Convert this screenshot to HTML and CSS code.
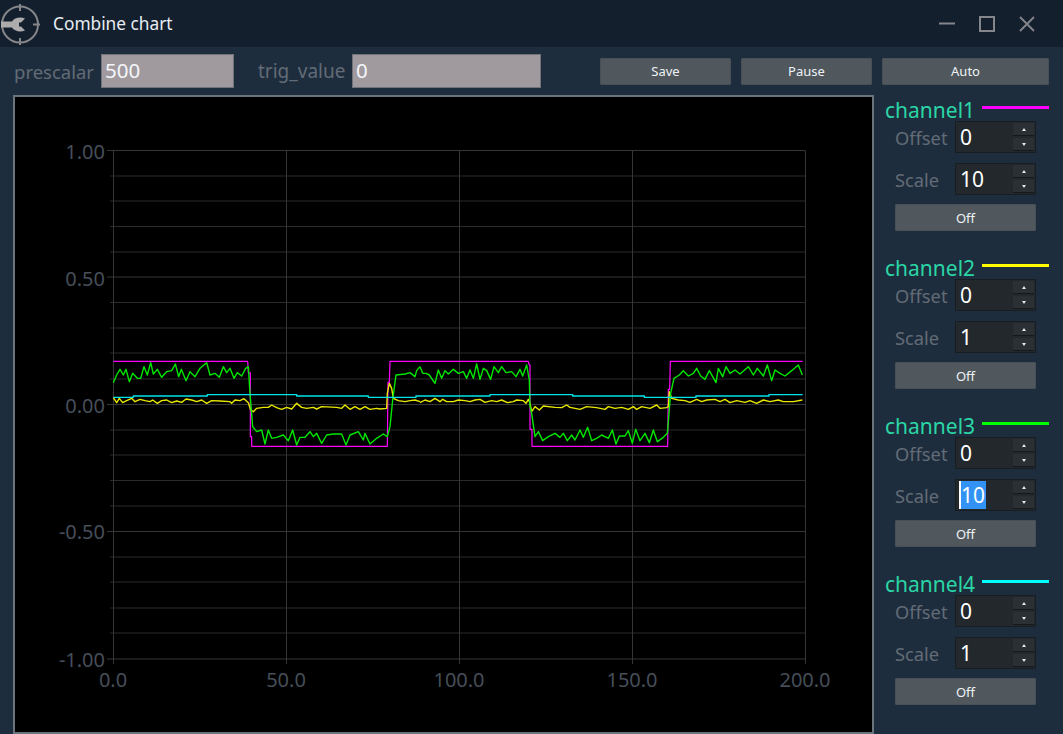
FILE: index.html
```html
<!doctype html>
<html>
<head>
<meta charset="utf-8">
<title>Combine chart</title>
<link rel="stylesheet" href="styles.css">
</head>

<body>
<div class="title_bar">
	<svg class="logo" width="42" height="46" viewBox="0 0 42 46">
		<circle cx="20" cy="23.500" r="18" fill="none" stroke="#85868a" stroke-width="2"/>
		<path d="M20 3V10M20 37V44M33 23.500H40" fill="none" stroke="#85868a" stroke-width="2"/>
		<path d="M1 20.500H12C14 17 20 15.500 25 17.500L21 21.500H19V25.500H21L25 29.500C20 31.500 14 30 12 26.500H1Z" fill="#adabab"/>
	</svg>
	<span class="title_text">Combine chart</span>
	<div class="win_btns">
		<svg width="16" height="16" viewBox="0 0 16 16"><path d="M0 7.500H16" stroke="#85868c" stroke-width="2"/></svg>
		<svg width="16" height="16" viewBox="0 0 16 16"><rect x="1" y="1" width="14" height="14" fill="none" stroke="#85868c" stroke-width="2"/></svg>
		<svg width="16" height="16" viewBox="0 0 16 16"><path d="M1 1L15 15M15 1L1 15" stroke="#85868c" stroke-width="1.800"/></svg>
	</div>
</div>

<div class="tool_bar">
	<label class="tool_label">prescalar</label>
	<div class="line_edit edit_short">500</div>
	<label class="tool_label label_trig">trig_value</label>
	<div class="line_edit edit_long">0</div>
	<div class="tool_btns">
		<div class="btn btn_tool">Save</div>
		<div class="btn btn_tool">Pause</div>
		<div class="btn btn_tool btn_auto">Auto</div>
	</div>
</div>

<div class="main">
	<div class="chart">
		<svg class="plot" width="857" height="635" viewBox="15 97 857 635">
			<!-- 网格 -->
			<path class="grid" d="M110 176H805M110 201H805M110 226.500H805M110 252H805M110 302.500H805M110 328H805M110 353H805M110 379H805M110 430H805M110 455H805M110 480.500H805M110 506H805M110 557H805M110 582H805M110 608H805M110 633H805"/>
			<path class="axis" d="M107 150.500H805M107 277H805M107 404.500H805M107 531.500H805M107 659H805M113.500 150.500V664M286.500 150.500V664M459.500 150.500V664M632.500 150.500V664M805.500 150.500V664"/>

			<text class="y_text" x="105" y="159">1.00</text>
			<text class="y_text" x="105" y="286">0.50</text>
			<text class="y_text" x="105" y="413">0.00</text>
			<text class="y_text" x="105" y="539">-0.50</text>
			<text class="y_text" x="105" y="667">-1.00</text>
			<text class="x_text" x="113" y="687">0.0</text>
			<text class="x_text" x="286" y="687">50.0</text>
			<text class="x_text" x="459" y="687">100.0</text>
			<text class="x_text" x="632" y="687">150.0</text>
			<text class="x_text" x="805" y="687">200.0</text>

			<!-- 曲线 -->
			<g transform="translate(100 350) scale(0.33333)">
				<polyline class="line ch1" points="40,34 443,34 445,68 451,68 451,260 455,260 455,289 862,289 864,97 868,97 870,34 960,34"/>
				<polyline class="line ch2" points="40,143 50,158 58,145 68,158 80,152 95,145 105,155 120,148 135,152 150,155 158,150 172,160 185,152 200,150 215,158 230,153 245,157 258,147 275,150 290,155 305,150 320,160 335,152 360,153 390,155 395,160 405,150 420,152 432,146 445,158 452,180 460,185 470,175 490,172 505,172 515,165 530,173 545,178 560,172 575,177 590,160 605,172 620,175 640,172 650,177 665,170 710,172 725,175 735,165 750,178 765,170 780,178 795,170 810,178 830,175 840,177 860,175 862,130 868,100 875,115 880,145 895,152 915,155 930,152 945,150 960,155"/>
				<polyline class="line ch3" points="40,98 50,75 60,58 70,75 78,58 88,95 98,70 112,85 122,85 132,50 142,75 152,38 160,72 172,58 185,82 200,65 215,62 226,42 236,80 244,58 258,92 270,65 285,80 300,55 320,38 330,75 345,70 358,82 370,50 380,68 390,55 402,85 412,68 425,78 437,55 445,50 450,130 458,230 470,245 485,240 495,282 505,240 515,265 530,262 550,255 565,272 578,240 590,285 600,262 615,262 630,245 640,260 650,250 665,280 680,255 700,252 725,252 738,285 750,255 775,245 790,270 795,250 810,282 830,265 850,252 862,260 870,230 878,150 888,75 915,72 930,68 945,80 950,62 960,50"/>
				<polyline class="line ch4" points="40,142 100,142 100,138 322,138 322,134 590,134 590,138 805,138 805,142 948,142 948,138 960,138"/>
			</g>
			<g transform="translate(420 350) scale(0.33333)">
				<polyline class="line ch1" points="0,34 325,34 328,45 330,45 330,238 336,238 336,289 743,289 745,118 749,118 751,34 1148,34"/>
				<polyline class="line ch2" points="0,158 15,150 30,155 45,145 60,155 68,148 80,155 100,155 115,150 135,152 150,155 165,150 180,148 195,157 215,152 230,155 245,150 262,158 280,155 290,150 310,152 318,160 325,148 330,160 335,185 345,170 358,180 370,168 405,172 425,173 440,165 450,172 480,178 500,170 530,173 555,178 565,170 585,175 605,172 625,178 640,170 650,178 665,170 690,175 710,165 720,175 740,173 745,170 748,125 755,145 775,150 795,152 810,157 830,148 845,155 860,150 885,148 900,155 915,148 930,158 950,152 975,157 990,152 1010,160 1030,150 1050,155 1075,150 1090,155 1120,155 1147,150"/>
				<polyline class="line ch3" points="0,50 8,70 18,70 28,75 45,100 55,60 65,85 75,62 85,72 100,58 115,70 130,65 140,85 150,60 160,85 170,42 180,88 190,55 200,62 212,88 222,50 235,68 245,50 258,68 275,65 288,80 300,58 308,78 320,45 328,90 330,170 335,190 345,260 355,245 368,272 385,260 405,250 420,262 430,250 442,272 455,255 465,270 480,240 490,262 503,232 515,272 530,265 545,255 565,265 577,240 588,282 598,258 615,258 625,242 637,280 647,238 660,272 675,250 688,278 700,240 712,275 730,262 742,250 745,215 752,130 762,85 778,75 790,62 805,78 820,70 830,55 842,78 855,88 868,62 888,98 895,55 908,80 918,50 930,70 945,60 960,72 985,50 1000,75 1012,55 1030,78 1042,45 1055,92 1065,60 1080,70 1095,78 1115,62 1135,45 1147,75"/>
				<polyline class="line ch4" points="0,138 210,138 210,134 458,134 458,138 673,138 673,142 828,142 828,138 1047,138 1047,134 1148,134"/>
			</g>
		</svg>
	</div>

	<div class="side">
		<div class="channel">
			<div class="channel_head"><span class="channel_name">channel1</span><i class="channel_line line_ch1"></i></div>
			<div class="spin_row">
				<label class="spin_label">Offset</label>
				<div class="spin"><span class="spin_val">0</span><div class="spin_btns"><b class="spin_up"></b><b class="spin_down"></b></div></div>
			</div>
			<div class="spin_row">
				<label class="spin_label">Scale</label>
				<div class="spin"><span class="spin_val">10</span><div class="spin_btns"><b class="spin_up"></b><b class="spin_down"></b></div></div>
			</div>
			<div class="btn btn_off">Off</div>
		</div>
		<div class="channel">
			<div class="channel_head"><span class="channel_name">channel2</span><i class="channel_line line_ch2"></i></div>
			<div class="spin_row">
				<label class="spin_label">Offset</label>
				<div class="spin"><span class="spin_val">0</span><div class="spin_btns"><b class="spin_up"></b><b class="spin_down"></b></div></div>
			</div>
			<div class="spin_row">
				<label class="spin_label">Scale</label>
				<div class="spin"><span class="spin_val">1</span><div class="spin_btns"><b class="spin_up"></b><b class="spin_down"></b></div></div>
			</div>
			<div class="btn btn_off">Off</div>
		</div>
		<div class="channel">
			<div class="channel_head"><span class="channel_name">channel3</span><i class="channel_line line_ch3"></i></div>
			<div class="spin_row">
				<label class="spin_label">Offset</label>
				<div class="spin"><span class="spin_val">0</span><div class="spin_btns"><b class="spin_up"></b><b class="spin_down"></b></div></div>
			</div>
			<div class="spin_row">
				<label class="spin_label">Scale</label>
				<div class="spin"><span class="spin_val spin_sel">10</span><div class="spin_btns"><b class="spin_up"></b><b class="spin_down"></b></div></div>
			</div>
			<div class="btn btn_off">Off</div>
		</div>
		<div class="channel">
			<div class="channel_head"><span class="channel_name">channel4</span><i class="channel_line line_ch4"></i></div>
			<div class="spin_row">
				<label class="spin_label">Offset</label>
				<div class="spin"><span class="spin_val">0</span><div class="spin_btns"><b class="spin_up"></b><b class="spin_down"></b></div></div>
			</div>
			<div class="spin_row">
				<label class="spin_label">Scale</label>
				<div class="spin"><span class="spin_val">1</span><div class="spin_btns"><b class="spin_up"></b><b class="spin_down"></b></div></div>
			</div>
			<div class="btn btn_off">Off</div>
		</div>
	</div>
</div>
</body>
</html>
```

FILE: styles.css
```css
* {margin:0; padding:0; box-sizing:border-box;}

html, body {height:100%;}
body {width:1063px; height:734px; overflow:hidden; background:#1e2d3d; font-family:"Noto Sans", "Noto Sans CJK SC", sans-serif; color:#fff;}

.title_bar {display:flex; align-items:center; height:47px; background:#141f2e;}
.logo {flex:none; margin-top:1px;}
.title_text {margin-left:11px; font-size:17.300px; color:#e6edf3;}
.win_btns {display:flex; gap:24px; margin-left:auto; padding-right:28px;}

.tool_bar {display:flex; align-items:center; height:48px; padding:0 14px;}
.tool_label {width:79px; font-size:18.500px; white-space:nowrap; color:#626b76;}
.label_trig {width:86px; margin-left:24px; font-size:19px;}
.line_edit {height:34px; margin-left:8px; padding-left:3px; border:1.500px solid #72727c; background:#a09a9e; font-size:20.500px; line-height:30px; color:#f4f6fa;}
.edit_short {width:133px;}
.edit_long {width:189px;}
.tool_btns {display:flex; gap:10px; margin-left:auto;}

.btn {display:flex; align-items:center; justify-content:center; border-radius:2px; background:#50585e; box-shadow:inset 0 0 0 1px #485056; font-size:13px; color:#eef2f5;}
.btn_tool {width:131px; height:27px;}
.btn_auto {width:167px;}

.main {display:flex; height:639px;}
.chart {flex:none; width:861px; height:639px; margin-left:13px; border:2px solid #6b747b; background:#000;}
.plot {display:block;}

.grid {fill:none; stroke:#2b2b2b; stroke-width:1;}
.axis {fill:none; stroke:#363636; stroke-width:1;}
.y_text, .x_text {font-size:20px; fill:#464e59;}
.y_text {text-anchor:end;}
.x_text {text-anchor:middle;}

.line {fill:none; stroke-width:1.400; stroke-linejoin:round; vector-effect:non-scaling-stroke;}
.ch1 {stroke:#f0f; stroke-width:1.200;}
.ch2 {stroke:#e8e800;}
.ch3 {stroke:#00e800;}
.ch4 {stroke:#00e4ea;}

.side {flex:none; width:164px; margin-left:11px; padding-top:3px;}
.channel {height:158px;}
.channel_head {display:flex; height:23px;}
.channel_name {font-size:21px; line-height:24px; color:#2ad6a6;}
.channel_line {flex:1; height:3px; margin:8px 0 0 7px;}
.line_ch1 {background:#f0f;}
.line_ch2 {background:#ff0;}
.line_ch3 {background:#0f0;}
.line_ch4 {background:#0ff;}

.spin_row {display:flex; align-items:center; height:32px; margin-bottom:10px; padding-left:10px;}
.spin_label {width:60px; font-size:18.300px; color:#626b76;}
.spin {display:flex; width:81px; height:32px; padding:1px 1px 1px 4px; border:1px solid #171d20; background:#22282c; align-items:center; justify-content:space-between;}
.spin_val {font-size:21px; line-height:28px; color:#fff;}
.spin_sel {border-left:2px solid #fff; padding-right:1px; background:#3393f5; margin-left:-1px;}
.spin_btns {display:flex; flex-direction:column; gap:2px; width:21px;}
.spin_up, .spin_down {display:flex; align-items:center; justify-content:center; height:13px; background:#2a3034; box-shadow:inset 0 -1px 0 #15191b;}
.spin_up:after, .spin_down:after {content:""; width:0; height:0; border-left:2.500px solid transparent; border-right:2.500px solid transparent;}
.spin_up:after {border-bottom:3px solid #e8e8e8;}
.spin_down:after {border-top:3px solid #e8e8e8;}

.btn_off {width:141px; height:27px; margin:-1px 0 0 10px;}
```
